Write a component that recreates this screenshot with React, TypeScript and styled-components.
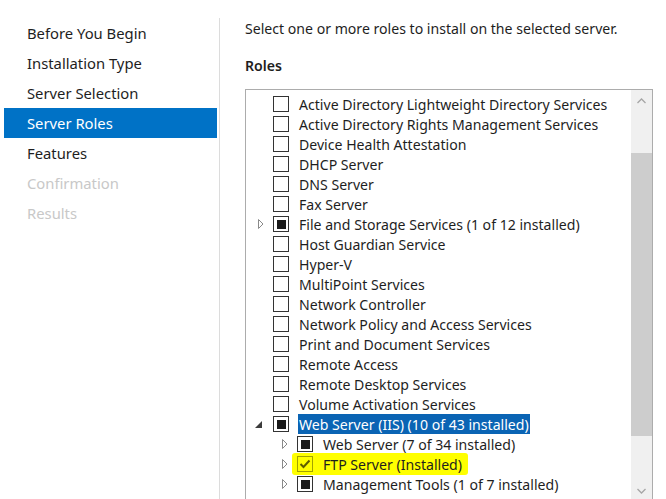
import React from "react";
import styled, { createGlobalStyle } from "styled-components";

const Global = createGlobalStyle`
  html, body { margin: 0; padding: 0; background: #ffffff; overflow: hidden; }
  body { font-family: "Noto Sans", "Open Sans", sans-serif; color: #1e1e1e; }
`;

const Page = styled.div`
  display: flex;
  width: 666px;
  height: 499px;
  overflow: hidden;
  font-size: 14.1px;
`;

const Nav = styled.nav`
  box-sizing: border-box;
  width: 220px;
  margin-top: 18px;
  padding: 0 2px 0 4px;
  border-right: 1px solid #dcdcdc;
  display: flex;
  flex-direction: column;
  font-size: 14.8px;
`;

const NavItem = styled.div<{ $active?: boolean; $disabled?: boolean }>`
  height: 30px;
  line-height: 30px;
  padding-left: 23px;
  white-space: nowrap;
  background: ${(p) => (p.$active ? "#0072c6" : "transparent")};
  color: ${(p) => (p.$active ? "#ffffff" : p.$disabled ? "#c8c8c8" : "#1e1e1e")};
`;

const Main = styled.main`
  flex: 1;
  padding: 19px 0 0 25px;
  display: flex;
  flex-direction: column;
  min-width: 0;
`;

const Intro = styled.div`
  line-height: 20px;
  white-space: nowrap;
`;

const Heading = styled.div`
  margin-top: 17px;
  line-height: 20px;
  font-weight: 600;
`;

const ListBox = styled.div`
  margin-top: 13px;
  width: 408px;
  height: 413px;
  box-sizing: border-box;
  border: 1px solid #acacac;
  display: flex;
  flex-shrink: 0;
`;

const Rows = styled.div`
  flex: 1;
  padding-top: 4px;
  display: flex;
  flex-direction: column;
`;

const Row = styled.div<{ $level: number }>`
  height: 20px;
  display: flex;
  align-items: center;
  padding-left: ${(p) => 8 + p.$level * 24}px;
  white-space: nowrap;
`;

const Expander = styled.span`
  width: 16px;
  height: 20px;
  margin-right: 3px;
  display: flex;
  align-items: center;
  flex-shrink: 0;
`;

const Box = styled.span<{ $disabled?: boolean }>`
  box-sizing: border-box;
  width: 16px;
  height: 16px;
  border: 1px solid ${(p) => (p.$disabled ? "#a3a300" : "#333333")};
  display: flex;
  align-items: center;
  justify-content: center;
  flex-shrink: 0;
  margin-right: 10px;
`;

const Fill = styled.span`
  width: 9px;
  height: 9px;
  background: #1a1a1a;
`;

const Label = styled.span<{ $selected?: boolean }>`
  line-height: 22px;
  height: 20px;
  padding: 0 1px;
  margin-left: -1px;
  background: ${(p) => (p.$selected ? "#0a64b4" : "transparent")};
  color: ${(p) => (p.$selected ? "#ffffff" : "#1e1e1e")};
`;

const Marker = styled.span`
  display: flex;
  align-items: center;
  height: 22px;
  margin-left: -5px;
  padding: 0 5px 0 5px;
  background: #ffff00;
  border-radius: 3px;
`;

const ScrollBar = styled.div`
  width: 21px;
  background: #f0f0f0;
  display: flex;
  flex-direction: column;
  flex-shrink: 0;
`;

const ScrollButton = styled.div`
  height: 21px;
  display: flex;
  align-items: center;
  justify-content: center;
  flex-shrink: 0;
`;

const Track = styled.div<{ $offset: number }>`
  flex: 1;
  padding-top: ${(p) => p.$offset}px;
`;

const Thumb = styled.div<{ $size: number }>`
  height: ${(p) => p.$size}px;
  background: #cdcdcd;
`;

type State = "none" | "partial" | "checked";
type Item = {
  label: string;
  level: number;
  state: State;
  expander?: "collapsed" | "expanded";
  selected?: boolean;
  marked?: boolean;
};

const items: Item[] = [
  { label: "Active Directory Lightweight Directory Services", level: 0, state: "none" },
  { label: "Active Directory Rights Management Services", level: 0, state: "none" },
  { label: "Device Health Attestation", level: 0, state: "none" },
  { label: "DHCP Server", level: 0, state: "none" },
  { label: "DNS Server", level: 0, state: "none" },
  { label: "Fax Server", level: 0, state: "none" },
  { label: "File and Storage Services (1 of 12 installed)", level: 0, state: "partial", expander: "collapsed" },
  { label: "Host Guardian Service", level: 0, state: "none" },
  { label: "Hyper-V", level: 0, state: "none" },
  { label: "MultiPoint Services", level: 0, state: "none" },
  { label: "Network Controller", level: 0, state: "none" },
  { label: "Network Policy and Access Services", level: 0, state: "none" },
  { label: "Print and Document Services", level: 0, state: "none" },
  { label: "Remote Access", level: 0, state: "none" },
  { label: "Remote Desktop Services", level: 0, state: "none" },
  { label: "Volume Activation Services", level: 0, state: "none" },
  { label: "Web Server (IIS) (10 of 43 installed)", level: 0, state: "partial", expander: "expanded", selected: true },
  { label: "Web Server (7 of 34 installed)", level: 1, state: "partial", expander: "collapsed" },
  { label: "FTP Server (Installed)", level: 1, state: "checked", expander: "collapsed", marked: true },
  { label: "Management Tools (1 of 7 installed)", level: 1, state: "partial", expander: "collapsed" },
];

const ExpanderIcon = ({ kind }: { kind?: "collapsed" | "expanded" }) => {
  if (!kind) return <Expander />;
  return (
    <Expander>
      {kind === "collapsed" ? (
        <svg width="16" height="10" viewBox="0 0 16 10">
          <path d="M4.5 0.5 L9 5 L4.5 9.5 Z" fill="none" stroke="#8a8a8a" strokeWidth="1" />
        </svg>
      ) : (
        <svg width="16" height="10" viewBox="0 0 16 10">
          <path d="M8 2 L8 9 L1 9 Z" fill="#3c3c3c" />
        </svg>
      )}
    </Expander>
  );
};

const CheckBox = ({ state, disabled }: { state: State; disabled?: boolean }) => (
  <Box $disabled={disabled}>
    {state === "partial" && <Fill />}
    {state === "checked" && (
      <svg width="12" height="10" viewBox="0 0 12 10">
        <path d="M1.5 5 L4.5 8 L10.5 1.5" fill="none" stroke="#5f5f00" strokeWidth="2" />
      </svg>
    )}
  </Box>
);

const Chevron = ({ up }: { up?: boolean }) => (
  <svg width="9" height="6" viewBox="0 0 9 6">
    <path d={up ? "M0.5 5 L4.5 1 L8.5 5" : "M0.5 1 L4.5 5 L8.5 1"} fill="none" stroke="#a6a6a6" strokeWidth="1.3" />
  </svg>
);

const nav = [
  { label: "Before You Begin" },
  { label: "Installation Type" },
  { label: "Server Selection" },
  { label: "Server Roles", active: true },
  { label: "Features" },
  { label: "Confirmation", disabled: true },
  { label: "Results", disabled: true },
];

export default function App() {
  return (
    <>
      <Global />
      <Page>
        <Nav>
          {nav.map((n) => (
            <NavItem key={n.label} $active={n.active} $disabled={n.disabled}>
              {n.label}
            </NavItem>
          ))}
        </Nav>
        <Main>
          <Intro>Select one or more roles to install on the selected server.</Intro>
          <Heading>Roles</Heading>
          <ListBox>
            <Rows>
              {items.map((it) => (
                <Row key={it.label} $level={it.level}>
                  <ExpanderIcon kind={it.expander} />
                  {it.marked ? (
                    <Marker>
                      <CheckBox state={it.state} disabled />
                      <Label>{it.label}</Label>
                    </Marker>
                  ) : (
                    <>
                      <CheckBox state={it.state} />
                      <Label $selected={it.selected}>{it.label}</Label>
                    </>
                  )}
                </Row>
              ))}
            </Rows>
            <ScrollBar>
              <ScrollButton>
                <Chevron up />
              </ScrollButton>
              <Track $offset={42}>
                <Thumb $size={283} />
              </Track>
              <ScrollButton>
                <Chevron />
              </ScrollButton>
            </ScrollBar>
          </ListBox>
        </Main>
      </Page>
    </>
  );
}
